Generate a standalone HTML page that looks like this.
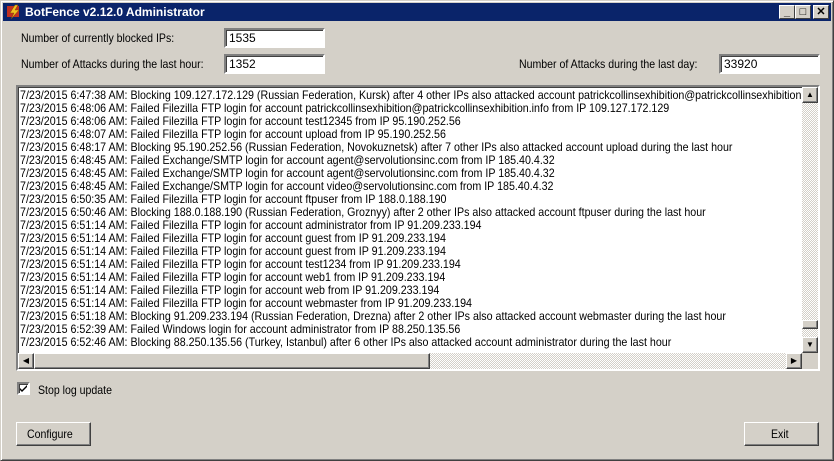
<!DOCTYPE html>
<html><head><style>
*{margin:0;padding:0;box-sizing:border-box}
body{width:834px;height:461px;background:#d4d0c8;font-family:"Liberation Sans",sans-serif;font-size:12px;color:#000;position:relative;overflow:hidden}
.frame{position:absolute;left:0;top:0;width:834px;height:461px;border:1px solid;border-color:#d4d0c8 #404040 #404040 #d4d0c8;box-shadow:inset 1px 1px 0 #fff,inset -1px -1px 0 #808080}
.title{position:absolute;left:3px;top:3px;width:828px;height:18px;background:#0a246a;color:#fff;font-weight:bold;font-size:12px;line-height:18px;padding-left:22px}
.tb{position:absolute;top:5px;width:16px;height:14px;background:#d4d0c8;border:1px solid;border-color:#fff #404040 #404040 #fff;font-size:11px;line-height:12px;text-align:center;font-weight:bold}
.n{position:absolute;display:inline-block;transform-origin:left top;transform:scaleX(0.88);white-space:nowrap}
.inp{position:absolute;height:20px;background:#fff;border:2px solid;border-color:#808080 #fff #fff #808080;box-shadow:inset 1px 1px 0 #404040;padding-left:3px;line-height:16px}
.list{position:absolute;left:16px;top:85px;width:804px;height:286px;background:#fff;border:2px solid;border-color:#808080 #fff #fff #808080;box-shadow:inset 1px 1px 0 #404040;overflow:hidden}
.lines{position:absolute;left:2px;top:2px;line-height:13px;white-space:nowrap;transform-origin:left top;transform:scaleX(0.89)}
.btn{position:absolute;background:#d4d0c8;border:1px solid;border-color:#fff #404040 #404040 #fff;box-shadow:inset -1px -1px 0 #808080;text-align:center}
.sb{position:absolute;background:#d4d0c8;border:1px solid;border-color:#fff #404040 #404040 #fff;box-shadow:inset -1px -1px 0 #808080}
.track{position:absolute;background:repeating-conic-gradient(#fff 0 25%,#d4d0c8 0 50%) 0 0/2px 2px}
</style></head><body>
<div class="frame"></div>
<div class="title"><svg style="position:absolute;left:3px;top:1px" width="16" height="16"><rect x="1" y="2" width="12" height="11" fill="#c03020"/><path d="M9 1 L4 9 L8 9 L5 15 L13 6 L9 6 L12 1Z" fill="#f0c020" stroke="#805000" stroke-width=".5"/></svg>BotFence v2.12.0 Administrator</div>
<div class="tb" style="left:779px">_</div><div class="tb" style="left:795px">□</div><div class="tb" style="left:813px">✕</div>
<div class="n" style="left:21px;top:31px">Number of currently blocked IPs:</div>
<div class="inp" style="left:224px;top:28px;width:101px">1535</div>
<div class="n" style="left:21px;top:57px">Number of Attacks during the last hour:</div>
<div class="inp" style="left:224px;top:54px;width:101px">1352</div>
<div class="n" style="left:519px;top:57px">Number of Attacks during the last day:</div>
<div class="inp" style="left:719px;top:54px;width:101px">33920</div>
<div class="list"><div class="lines">7/23/2015 6:47:38 AM: Blocking 109.127.172.129 (Russian Federation, Kursk) after 4 other IPs also attacked account patrickcollinsexhibition@patrickcollinsexhibition.info during the last hour<br>7/23/2015 6:48:06 AM: Failed Filezilla FTP login for account patrickcollinsexhibition@patrickcollinsexhibition.info from IP 109.127.172.129<br>7/23/2015 6:48:06 AM: Failed Filezilla FTP login for account test12345 from IP 95.190.252.56<br>7/23/2015 6:48:07 AM: Failed Filezilla FTP login for account upload from IP 95.190.252.56<br>7/23/2015 6:48:17 AM: Blocking 95.190.252.56 (Russian Federation, Novokuznetsk) after 7 other IPs also attacked account upload during the last hour<br>7/23/2015 6:48:45 AM: Failed Exchange/SMTP login for account agent@servolutionsinc.com from IP 185.40.4.32<br>7/23/2015 6:48:45 AM: Failed Exchange/SMTP login for account agent@servolutionsinc.com from IP 185.40.4.32<br>7/23/2015 6:48:45 AM: Failed Exchange/SMTP login for account video@servolutionsinc.com from IP 185.40.4.32<br>7/23/2015 6:50:35 AM: Failed Filezilla FTP login for account ftpuser from IP 188.0.188.190<br>7/23/2015 6:50:46 AM: Blocking 188.0.188.190 (Russian Federation, Groznyy) after 2 other IPs also attacked account ftpuser during the last hour<br>7/23/2015 6:51:14 AM: Failed Filezilla FTP login for account administrator from IP 91.209.233.194<br>7/23/2015 6:51:14 AM: Failed Filezilla FTP login for account guest from IP 91.209.233.194<br>7/23/2015 6:51:14 AM: Failed Filezilla FTP login for account guest from IP 91.209.233.194<br>7/23/2015 6:51:14 AM: Failed Filezilla FTP login for account test1234 from IP 91.209.233.194<br>7/23/2015 6:51:14 AM: Failed Filezilla FTP login for account web1 from IP 91.209.233.194<br>7/23/2015 6:51:14 AM: Failed Filezilla FTP login for account web from IP 91.209.233.194<br>7/23/2015 6:51:14 AM: Failed Filezilla FTP login for account webmaster from IP 91.209.233.194<br>7/23/2015 6:51:18 AM: Blocking 91.209.233.194 (Russian Federation, Drezna) after 2 other IPs also attacked account webmaster during the last hour<br>7/23/2015 6:52:39 AM: Failed Windows login for account administrator from IP 88.250.135.56<br>7/23/2015 6:52:46 AM: Blocking 88.250.135.56 (Turkey, Istanbul) after 6 other IPs also attacked account administrator during the last hour</div>
<div class="track" style="left:784px;top:0;width:16px;height:266px"></div>
<div class="sb" style="left:784px;top:0;width:16px;height:16px;font-size:8px;line-height:14px;text-align:center">▲</div>
<div class="sb" style="left:784px;top:233px;width:16px;height:9px"></div>
<div class="sb" style="left:784px;top:250px;width:16px;height:16px;font-size:8px;line-height:14px;text-align:center">▼</div>
<div class="track" style="left:0;top:266px;width:784px;height:16px"></div>
<div class="sb" style="left:0;top:266px;width:16px;height:16px;font-size:8px;line-height:14px;text-align:center">◀</div>
<div class="sb" style="left:16px;top:266px;width:396px;height:16px"></div>
<div class="sb" style="left:768px;top:266px;width:16px;height:16px;font-size:8px;line-height:14px;text-align:center">▶</div>
<div style="position:absolute;left:784px;top:266px;width:16px;height:16px;background:#d4d0c8"></div>
</div>
<div style="position:absolute;left:17px;top:382px;width:13px;height:13px;background:#fff;border:2px solid;border-color:#808080 #fff #fff #808080;box-shadow:inset 1px 1px 0 #404040"><svg width="9" height="9" style="position:absolute;left:0;top:0"><path d="M1 4 L3 6 L8 1 L8 3 L3 8 L1 6Z" fill="#000"/></svg></div>
<div class="n" style="left:38px;top:383px">Stop log update</div>
<div class="btn" style="left:16px;top:422px;width:75px;height:24px;line-height:22px"><span class="n" style="position:static">Configure</span></div>
<div class="btn" style="left:744px;top:422px;width:75px;height:24px;line-height:22px"><span class="n" style="position:static">Exit</span></div>
</body></html>
